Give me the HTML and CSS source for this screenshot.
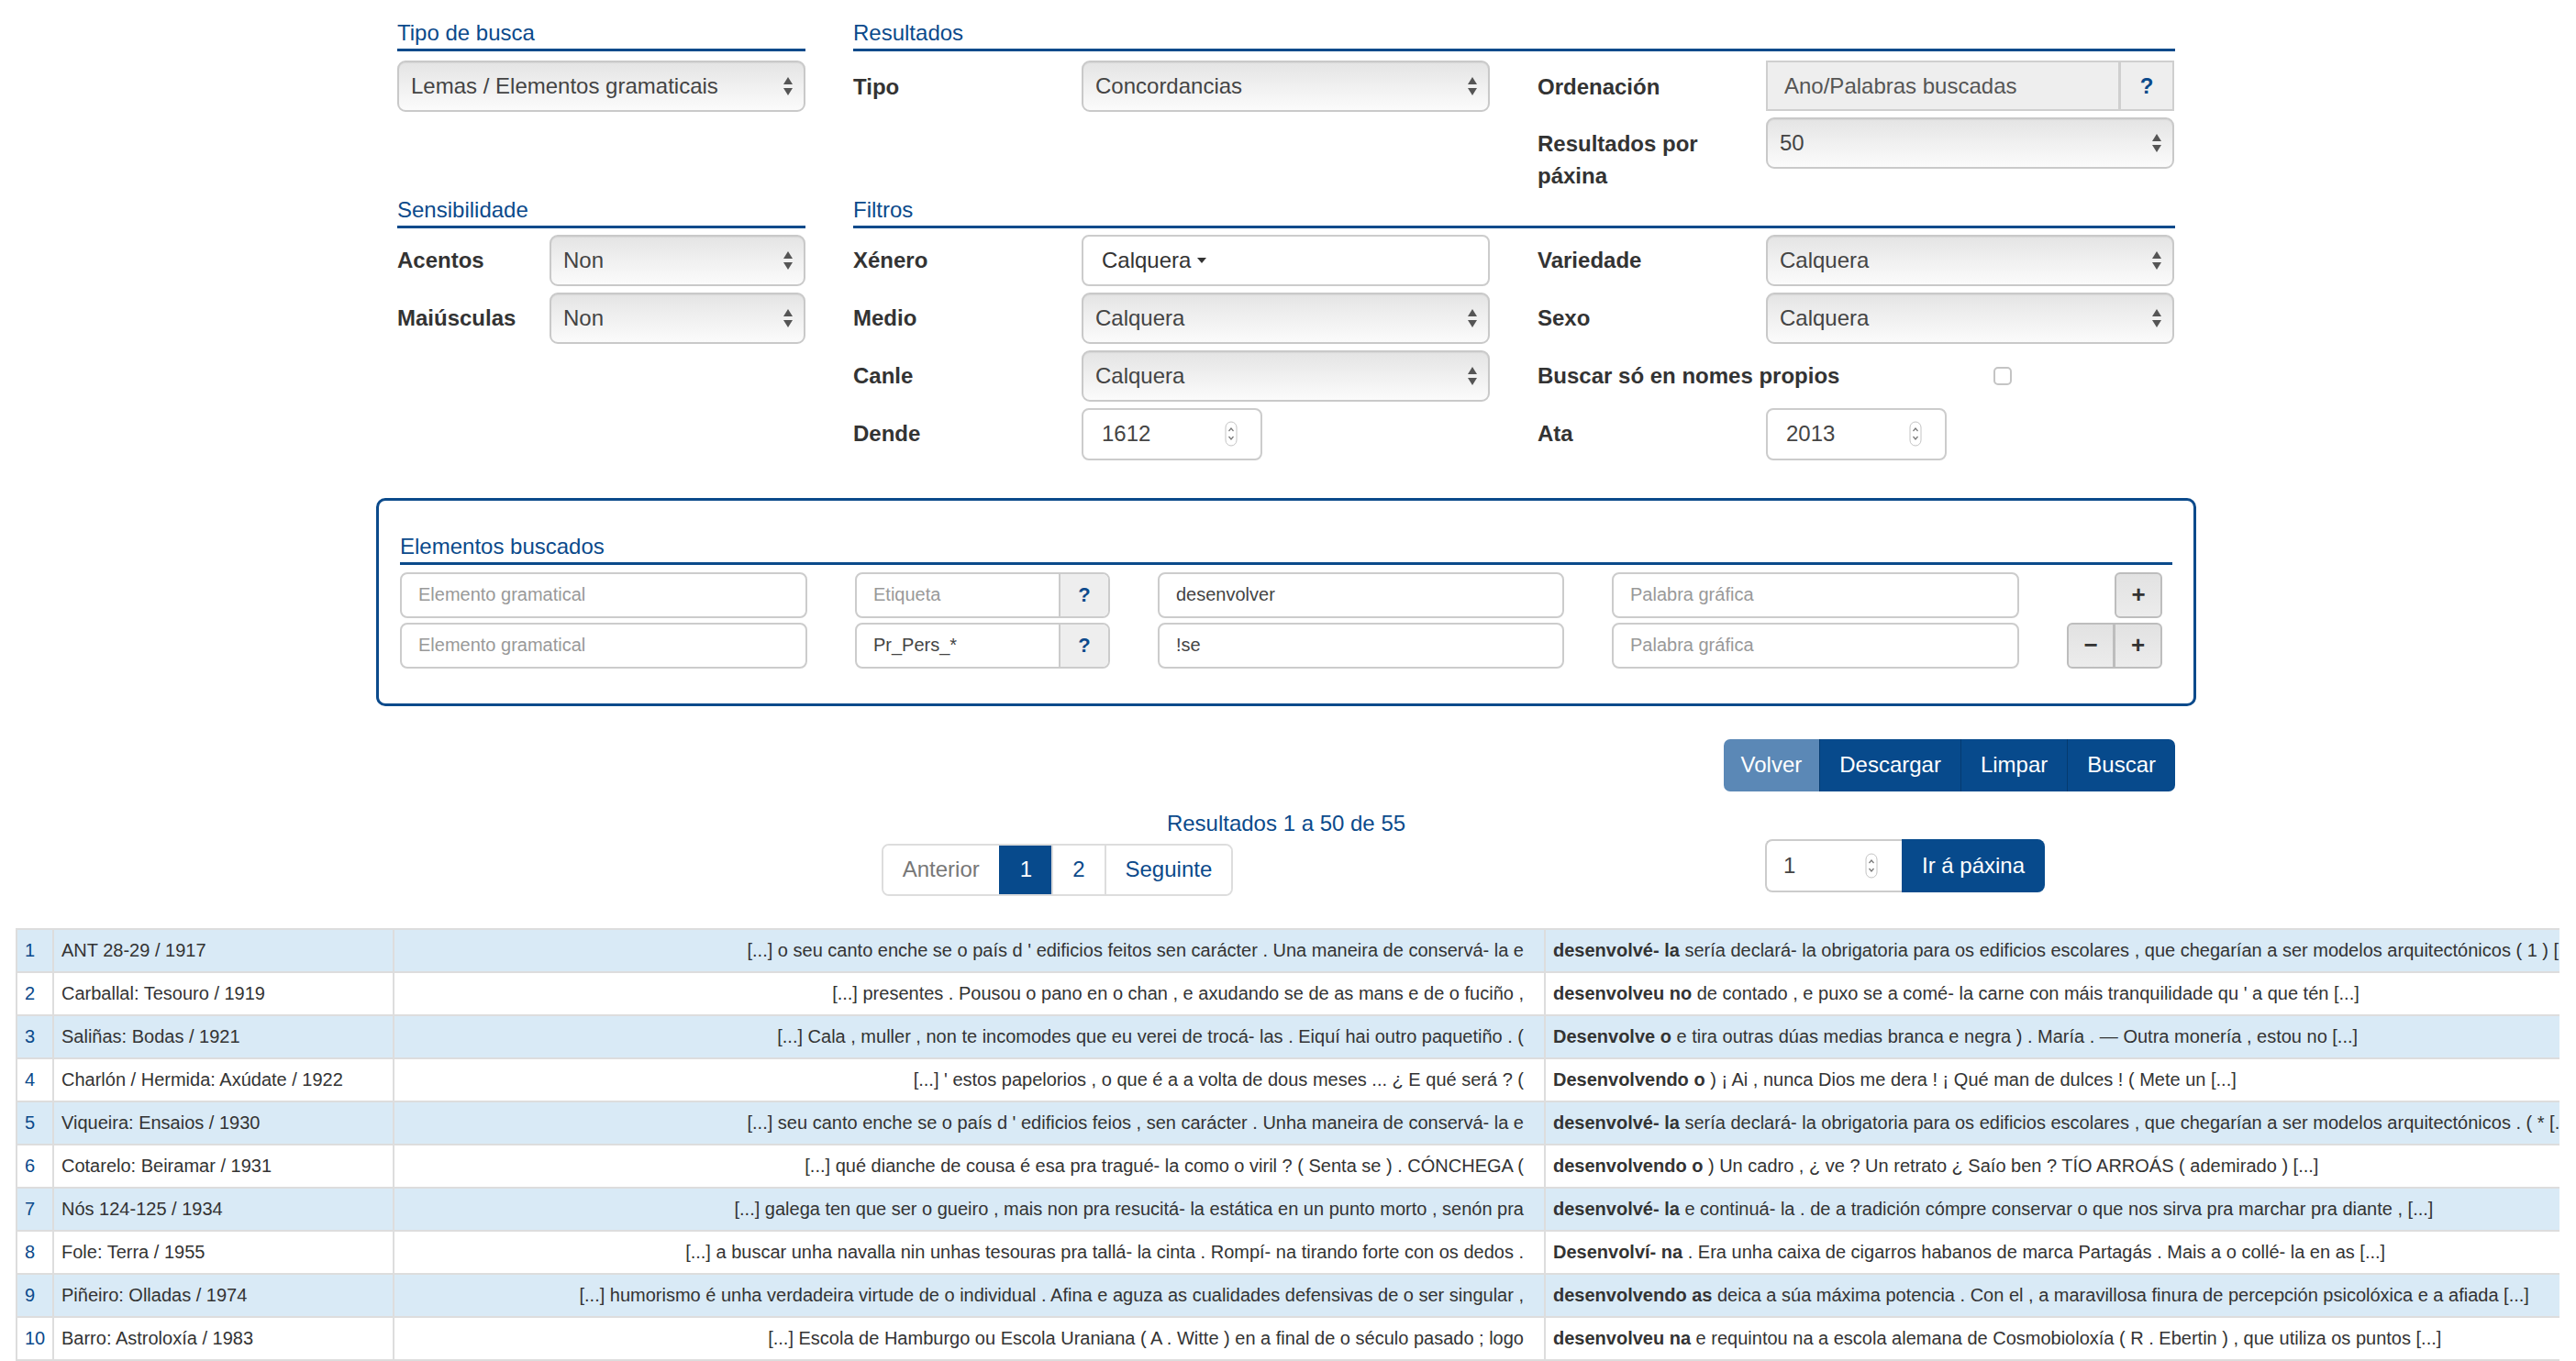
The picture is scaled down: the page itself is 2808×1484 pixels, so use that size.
FILE: index.html
```html
<!DOCTYPE html>
<html lang="gl">
<head>
<meta charset="utf-8">
<title>Busca</title>
<link rel="stylesheet" href="styles.css">
</head>
<body>
<div class="container">
  <div class="top-grid">
    <section class="sec">
      <div class="legend">Tipo de busca</div>
      <div class="select"><span>Lemas / Elementos gramaticais</span><svg class="arr" width="10" height="22" viewBox="0 0 10 22"><polygon points="0,9 5,1 10,9"/><polygon points="0,13 5,21 10,13"/></svg></div>
    </section>
    <section class="sec">
      <div class="legend">Resultados</div>
      <div class="pair-grid">
        <div class="fg"><label>Tipo</label><div class="select"><span>Concordancias</span><svg class="arr" width="10" height="22" viewBox="0 0 10 22"><polygon points="0,9 5,1 10,9"/><polygon points="0,13 5,21 10,13"/></svg></div></div>
        <div class="fg"><label>Ordenación</label><div class="igroup"><span class="ig-text">Ano/Palabras buscadas</span><span class="ig-addon">?</span></div></div>
        <div class="fg"></div>
        <div class="fg"><label>Resultados por páxina</label><div class="select"><span>50</span><svg class="arr" width="10" height="22" viewBox="0 0 10 22"><polygon points="0,9 5,1 10,9"/><polygon points="0,13 5,21 10,13"/></svg></div></div>
      </div>
    </section>
    <section class="sec">
      <div class="legend legend-tight">Sensibilidade</div>
      <div class="stack">
        <div class="fg fg-sm"><label>Acentos</label><div class="select"><span>Non</span><svg class="arr" width="10" height="22" viewBox="0 0 10 22"><polygon points="0,9 5,1 10,9"/><polygon points="0,13 5,21 10,13"/></svg></div></div>
        <div class="fg fg-sm"><label>Maiúsculas</label><div class="select"><span>Non</span><svg class="arr" width="10" height="22" viewBox="0 0 10 22"><polygon points="0,9 5,1 10,9"/><polygon points="0,13 5,21 10,13"/></svg></div></div>
      </div>
    </section>
    <section class="sec">
      <div class="legend legend-tight">Filtros</div>
      <div class="pair-grid pair-grid-2">
        <div class="fg"><label>Xénero</label><div class="multi"><span>Calquera</span><svg class="caret" width="10" height="6" viewBox="0 0 10 6"><polygon points="0,0 10,0 5,6"/></svg></div></div>
        <div class="fg"><label>Variedade</label><div class="select"><span>Calquera</span><svg class="arr" width="10" height="22" viewBox="0 0 10 22"><polygon points="0,9 5,1 10,9"/><polygon points="0,13 5,21 10,13"/></svg></div></div>
        <div class="fg"><label>Medio</label><div class="select"><span>Calquera</span><svg class="arr" width="10" height="22" viewBox="0 0 10 22"><polygon points="0,9 5,1 10,9"/><polygon points="0,13 5,21 10,13"/></svg></div></div>
        <div class="fg"><label>Sexo</label><div class="select"><span>Calquera</span><svg class="arr" width="10" height="22" viewBox="0 0 10 22"><polygon points="0,9 5,1 10,9"/><polygon points="0,13 5,21 10,13"/></svg></div></div>
        <div class="fg"><label>Canle</label><div class="select"><span>Calquera</span><svg class="arr" width="10" height="22" viewBox="0 0 10 22"><polygon points="0,9 5,1 10,9"/><polygon points="0,13 5,21 10,13"/></svg></div></div>
        <div class="fg fg-check"><label>Buscar só en nomes propios</label><span class="checkbox"></span></div>
        <div class="fg"><label>Dende</label><div class="number"><span>1612</span><svg class="spin" width="14" height="28" viewBox="0 0 14 28"><rect x="1" y="1" width="12" height="26" rx="6" ry="6"/><polyline points="4.5,11 7,8 9.5,11"/><polyline points="4.5,17 7,20 9.5,17"/></svg></div></div>
        <div class="fg"><label>Ata</label><div class="number"><span>2013</span><svg class="spin" width="14" height="28" viewBox="0 0 14 28"><rect x="1" y="1" width="12" height="26" rx="6" ry="6"/><polyline points="4.5,11 7,8 9.5,11"/><polyline points="4.5,17 7,20 9.5,17"/></svg></div></div>
      </div>
    </section>
  </div>

  <div class="search-box">
    <div class="legend legend-box">Elementos buscados</div>
    <div class="el-grid">
      <div class="inp ph">Elemento gramatical</div>
      <div class="inp-group"><span class="inp-part ph">Etiqueta</span><span class="inp-addon">?</span></div>
      <div class="inp">desenvolver</div>
      <div class="inp ph">Palabra gráfica</div>
      <div class="row-btns"><span class="pm">+</span></div>

      <div class="inp ph">Elemento gramatical</div>
      <div class="inp-group"><span class="inp-part">Pr_Pers_*</span><span class="inp-addon">?</span></div>
      <div class="inp">!se</div>
      <div class="inp ph">Palabra gráfica</div>
      <div class="row-btns"><span class="pm">&minus;</span><span class="pm">+</span></div>
    </div>
  </div>

  <div class="actions">
    <div class="btn-group">
      <span class="btn btn-light">Volver</span><span class="btn">Descargar</span><span class="btn">Limpar</span><span class="btn">Buscar</span>
    </div>
  </div>

  <div class="count">Resultados 1 a 50 de 55</div>

  <div class="pager-row">
    <div></div>
    <div class="pager-cell">
      <div class="pagination"><span class="pg disabled">Anterior</span><span class="pg active">1</span><span class="pg">2</span><span class="pg">Seguinte</span></div>
    </div>
    <div></div>
    <div class="goto">
      <div class="goto-input"><span>1</span><svg class="spin" width="14" height="28" viewBox="0 0 14 28"><rect x="1" y="1" width="12" height="26" rx="6" ry="6"/><polyline points="4.5,11 7,8 9.5,11"/><polyline points="4.5,17 7,20 9.5,17"/></svg></div>
      <span class="goto-btn">Ir á páxina</span>
    </div>
  </div>
</div>

<div class="table-wrap">
<table class="results">
  <colgroup><col class="c-n"><col class="c-src"><col class="c-left"><col class="c-kw"></colgroup>
  <tbody>
    <tr class="odd"><td class="n">1</td><td>ANT 28-29 / 1917</td><td class="left">[...] o seu canto enche se o país d ' edificios feitos sen carácter . Una maneira de conservá- la e</td><td><b>desenvolvé- la</b> sería declará- la obrigatoria para os edificios escolares , que chegarían a ser modelos arquitectónicos ( 1 ) [...]</td></tr>
    <tr><td class="n">2</td><td>Carballal: Tesouro / 1919</td><td class="left">[...] presentes . Pousou o pano en o chan , e axudando se de as mans e de o fuciño ,</td><td><b>desenvolveu no</b> de contado , e puxo se a comé- la carne con máis tranquilidade qu ' a que tén [...]</td></tr>
    <tr class="odd"><td class="n">3</td><td>Saliñas: Bodas / 1921</td><td class="left">[...] Cala , muller , non te incomodes que eu verei de trocá- las . Eiquí hai outro paquetiño . (</td><td><b>Desenvolve o</b> e tira outras dúas medias branca e negra ) . María . — Outra monería , estou no [...]</td></tr>
    <tr><td class="n">4</td><td>Charlón / Hermida: Axúdate / 1922</td><td class="left">[...] ' estos papelorios , o que é a a volta de dous meses ... ¿ E qué será ? (</td><td><b>Desenvolvendo o</b> ) ¡ Ai , nunca Dios me dera ! ¡ Qué man de dulces ! ( Mete un [...]</td></tr>
    <tr class="odd"><td class="n">5</td><td>Viqueira: Ensaios / 1930</td><td class="left">[...] seu canto enche se o país d ' edificios feios , sen carácter . Unha maneira de conservá- la e</td><td><b>desenvolvé- la</b> sería declará- la obrigatoria para os edificios escolares , que chegarían a ser modelos arquitectónicos . ( * [...]</td></tr>
    <tr><td class="n">6</td><td>Cotarelo: Beiramar / 1931</td><td class="left">[...] qué dianche de cousa é esa pra tragué- la como o viril ? ( Senta se ) . CÓNCHEGA (</td><td><b>desenvolvendo o</b> ) Un cadro , ¿ ve ? Un retrato ¿ Saío ben ? TÍO ARROÁS ( ademirado ) [...]</td></tr>
    <tr class="odd"><td class="n">7</td><td>Nós 124-125 / 1934</td><td class="left">[...] galega ten que ser o gueiro , mais non pra resucitá- la estática en un punto morto , senón pra</td><td><b>desenvolvé- la</b> e continuá- la . de a tradición cómpre conservar o que nos sirva pra marchar pra diante , [...]</td></tr>
    <tr><td class="n">8</td><td>Fole: Terra / 1955</td><td class="left">[...] a buscar unha navalla nin unhas tesouras pra tallá- la cinta . Rompí- na tirando forte con os dedos .</td><td><b>Desenvolví- na</b> . Era unha caixa de cigarros habanos de marca Partagás . Mais a o collé- la en as [...]</td></tr>
    <tr class="odd"><td class="n">9</td><td>Piñeiro: Olladas / 1974</td><td class="left">[...] humorismo é unha verdadeira virtude de o individual . Afina e aguza as cualidades defensivas de o ser singular ,</td><td><b>desenvolvendo as</b> deica a súa máxima potencia . Con el , a maravillosa finura de percepción psicolóxica e a afiada [...]</td></tr>
    <tr><td class="n">10</td><td>Barro: Astroloxía / 1983</td><td class="left">[...] Escola de Hamburgo ou Escola Uraniana ( A . Witte ) en a final de o século pasado ; logo</td><td><b>desenvolveu na</b> e requintou na a escola alemana de Cosmobioloxía ( R . Ebertin ) , que utiliza os puntos [...]</td></tr>
    <tr class="odd"><td class="n"></td><td></td><td class="left"></td><td></td></tr>
  </tbody>
</table>
</div>
</body>
</html>
```

FILE: styles.css
```css
* { box-sizing: border-box; }
html, body { margin: 0; padding: 0; overflow: hidden; }
body {
  font-family: "Liberation Sans", Arial, Helvetica, sans-serif;
  font-size: 24px;
  color: #333;
  background: #fff;
  width: 2808px;
  height: 1484px;
}

.container { width: 1938px; margin: 0 0 0 433px; padding-top: 19px; }

.top-grid {
  display: grid;
  grid-template-columns: 445px 1441px;
  column-gap: 52px;
  row-gap: 3px;
}

.legend {
  color: #0b4a8b;
  font-size: 24px;
  line-height: 34px;
  border-bottom: 3px solid #0b4a8b;
  margin-bottom: 10px;
}
.legend-tight { margin-bottom: 7px; }

.pair-grid {
  display: grid;
  grid-template-columns: 694px 694px;
  column-gap: 52px;
  row-gap: 6px;
}
.pair-grid-2 { row-gap: 7px; }
.stack { display: grid; row-gap: 7px; }

.fg {
  display: grid;
  grid-template-columns: 197px 445px;
  column-gap: 52px;
  align-items: start;
}
.fg-sm { grid-template-columns: 114px 279px; }
.fg-check { grid-template-columns: 445px 20px; align-items: center; }

label {
  font-weight: bold;
  line-height: 35px;
  padding-top: 10.5px;
  color: #333;
}
.fg-check label { padding-top: 0; }

.select {
  height: 56px;
  border: 2px solid #c9c9c9;
  border-radius: 9px;
  background: linear-gradient(to bottom, #e4e4e4 0%, #efefef 45%, #fbfbfb 100%);
  box-shadow: inset 0 1px 1px rgba(0,0,0,0.06);
  display: flex;
  align-items: center;
  justify-content: space-between;
  padding: 0 12px 0 13px;
  color: #444;
}
.arr { fill: #555; flex: none; }

.igroup {
  height: 55px;
  display: flex;
  border: 2px solid #cfcfcf;
  background: #eeeeee;
}
.ig-text { flex: 1; display: flex; align-items: center; padding-left: 18px; color: #555; }
.ig-addon {
  width: 59px;
  border-left: 3px solid #cfcfcf;
  display: flex;
  align-items: center;
  justify-content: center;
  color: #0b4a8b;
  font-weight: bold;
}

.multi {
  height: 56px;
  border: 2px solid #cccccc;
  border-radius: 8px;
  background: #fff;
  display: flex;
  align-items: center;
  gap: 7px;
  padding-left: 20px;
  color: #333;
}
.caret { fill: #333; }

.number {
  width: 197px;
  height: 57px;
  border: 2px solid #cccccc;
  border-radius: 8px;
  background: #fff;
  display: flex;
  align-items: center;
  justify-content: space-between;
  padding: 0 25px 0 20px;
  color: #444;
}
.spin rect { fill: #fff; stroke: #c4c4c4; stroke-width: 1; }
.spin polyline { fill: none; stroke: #777; stroke-width: 1.2; }

.checkbox {
  width: 20px;
  height: 20px;
  border: 2px solid #c4c4c4;
  border-radius: 5px;
  background: #fff;
}

.search-box {
  margin: 41px -23px 0;
  border: 3px solid #0b4a8b;
  border-radius: 10px;
  padding: 33px 23px 38px;
}
.legend-box { margin-bottom: 8px; }

.el-grid {
  display: grid;
  grid-template-columns: 444px 278px 443px 444px 1fr;
  column-gap: 52px;
  row-gap: 5px;
  font-size: 20px;
}
.inp {
  height: 50px;
  border: 2px solid #cccccc;
  border-radius: 8px;
  display: flex;
  align-items: center;
  padding-left: 18px;
  color: #444;
}
.ph { color: #999; }
.inp-group {
  height: 50px;
  display: flex;
  border: 2px solid #cccccc;
  border-radius: 8px;
  overflow: hidden;
}
.inp-part { flex: 1; display: flex; align-items: center; padding-left: 18px; }
.inp-part:not(.ph) { color: #444; }
.inp-addon {
  width: 54px;
  background: #eeeeee;
  border-left: 2px solid #cccccc;
  display: flex;
  align-items: center;
  justify-content: center;
  color: #0b4a8b;
  font-weight: bold;
  font-size: 22px;
}
.row-btns {
  display: flex;
  justify-content: flex-end;
  padding-right: 11px;
}
.pm {
  width: 52px;
  height: 50px;
  display: flex;
  align-items: center;
  justify-content: center;
  background: linear-gradient(to bottom, #e2e2e2, #ececec);
  border: 2px solid #bdbdbd;
  font-weight: bold;
  font-size: 26px;
  color: #333;
}
.pm:first-child { border-radius: 6px 0 0 6px; }
.pm:last-child { border-radius: 0 6px 6px 0; }
.pm:only-child { border-radius: 6px; }
.pm + .pm { border-left-width: 1px; }

.actions { margin-top: 36px; display: flex; justify-content: flex-end; }
.btn-group { display: flex; border-radius: 7px; overflow: hidden; }
.btn {
  height: 57px;
  display: flex;
  align-items: center;
  padding: 0 21px;
  background: #074a8c;
  color: #fff;
  border-left: 1px solid #053b70;
}
.btn-light { background: #5b88b6; border-left: none; padding: 0 19px; }

.count {
  margin-top: 18px;
  line-height: 34px;
  text-align: center;
  color: #0b4a8b;
}

.pager-row {
  display: grid;
  grid-template-columns: 445px 445px 445px 445px;
  column-gap: 52px;
  align-items: start;
}
.pager-cell { display: flex; justify-content: center; padding-top: 5px; }
.pagination {
  display: flex;
  border: 2px solid #dddddd;
  border-radius: 8px;
  overflow: hidden;
}
.pg {
  height: 53px;
  display: flex;
  align-items: center;
  padding: 0 21px;
  color: #0b4a8b;
  border-left: 2px solid #dddddd;
  background: #fff;
}
.pg:first-child { border-left: none; }
.pg.disabled { color: #777; }
.pg.active { background: #074a8c; color: #fff; border-left-color: #074a8c; }

.goto { display: flex; }
.goto-input {
  width: 149px;
  height: 58px;
  border: 2px solid #cccccc;
  border-right: none;
  border-radius: 8px 0 0 8px;
  display: flex;
  align-items: center;
  justify-content: space-between;
  padding: 0 26px 0 18px;
  color: #444;
}
.goto-btn {
  height: 58px;
  display: flex;
  align-items: center;
  padding: 0 22px;
  background: #074a8c;
  color: #fff;
  border-radius: 0 8px 8px 0;
}

.table-wrap {
  margin: 35px 0 0 17px;
  width: 2773px;
  overflow: hidden;
}
.results {
  border-collapse: collapse;
  table-layout: fixed;
  width: 3100px;
  font-size: 20px;
  color: #333;
}
.c-n { width: 40px; }
.c-src { width: 371px; }
.c-left { width: 1255px; }
.c-kw { width: 1434px; }
.results tr { height: 47px; }
.results td {
  border: 2px solid #dddddd;
  padding: 0 8px;
  white-space: nowrap;
  overflow: hidden;
  vertical-align: middle;
}
.results tr.odd td { background: #d9eaf6; }
.results td.n { color: #0b4a8b; padding: 0 0 0 8px; }
.results td.left { text-align: right; padding-right: 22px; }
```
